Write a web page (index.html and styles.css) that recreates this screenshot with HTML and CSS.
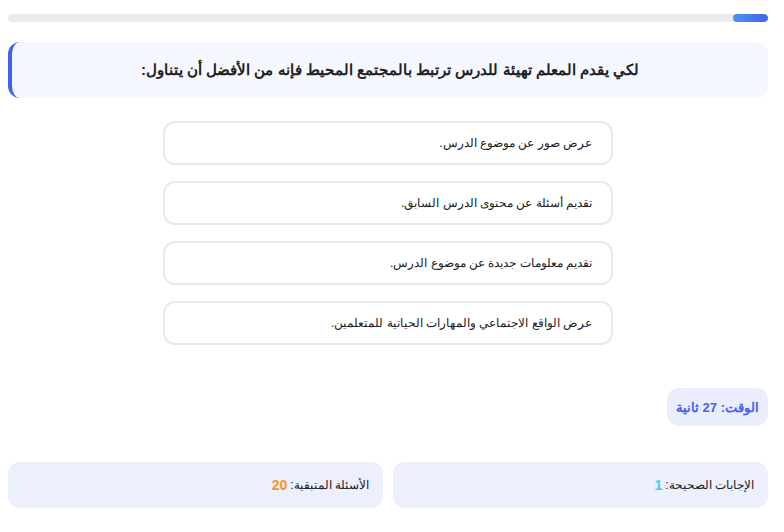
FILE: index.html
```html
<!DOCTYPE html>
<html lang="ar" dir="rtl">
<head>
<meta charset="utf-8">
<link rel="stylesheet" href="styles.css">
</head>
<body>
<div class="page">
  <div class="progress"><div class="progress-fill" style="width:35px"></div></div>
  <div class="question">لكي يقدم المعلم تهيئة للدرس ترتبط بالمجتمع المحيط فإنه من الأفضل أن يتناول:</div>
  <div class="options">
    <div class="option">عرض صور عن موضوع الدرس.</div>
    <div class="option">تقديم أسئلة عن محتوى الدرس السابق.</div>
    <div class="option">تقديم معلومات جديدة عن موضوع الدرس.</div>
    <div class="option">عرض الواقع الاجتماعي والمهارات الحياتية للمتعلمين.</div>
  </div>
  <div class="timer-row"><div class="timer">الوقت: 27 ثانية</div></div>
  <div class="stats">
    <div class="stat">الإجابات الصحيحة: <span class="num correct">1</span></div>
    <div class="stat">الأسئلة المتبقية: <span class="num remaining">20</span></div>
  </div>
</div>
</body>
</html>
```
FILE: styles.css
```css
html, body { margin: 0; padding: 0; background: #fff; }
body { font-family: "Liberation Sans", Arial, sans-serif; color: #222; }
.page { padding: 14px 16px 0 8px; }
.progress { height: 8px; background: #e9ecef; border-radius: 4px; overflow: hidden; display: flex; }
.progress-fill { height: 100%; background: linear-gradient(90deg, #4895ef, #4361ee); border-radius: 4px; }
.question { margin-top: 20px; height: 56px; box-sizing: border-box; background: #f4f7fe; border-left: 4px solid #4361ee; border-radius: 12px; display: flex; align-items: center; justify-content: center; font-weight: bold; font-size: 15px; color: #222; }
.options { margin: 23px auto 0; width: 450px; display: flex; flex-direction: column; gap: 16px; }
.option { height: 44px; box-sizing: border-box; border: 2px solid #e6e9ee; border-radius: 12px; display: flex; align-items: center; padding: 0 19px; font-size: 12px; color: #222; background: #fff; }
.timer-row { margin-top: 43px; display: flex; }
.timer { height: 38px; width: 101px; box-sizing: border-box; background: #eaedfc; border-radius: 12px; display: flex; align-items: center; justify-content: center; font-weight: bold; font-size: 13px; color: #4361ee; }
.stats { margin-top: 36px; display: flex; gap: 10px; }
.stat { flex: 1; height: 46px; box-sizing: border-box; background: #eceffc; border-radius: 12px; display: flex; align-items: center; padding: 0 14px; font-size: 12px; color: #222; }
.num { font-weight: bold; font-size: 14px; margin-right: 3px; }
.correct { color: #4cc9f0; }
.remaining { color: #f8961e; }
```
